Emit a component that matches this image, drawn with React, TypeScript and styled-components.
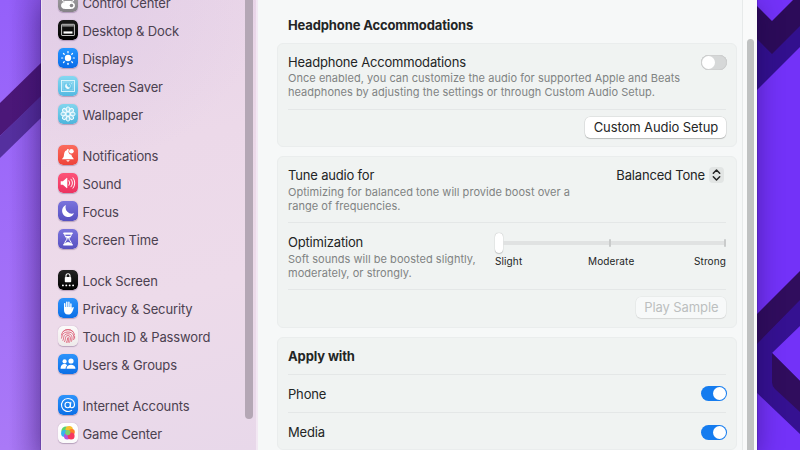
import React from "react";
import styled, { createGlobalStyle, css } from "styled-components";

const GlobalStyle = createGlobalStyle`
  * { box-sizing: border-box; }
  html, body, #root { margin: 0; padding: 0; width: 800px; height: 450px; overflow: hidden; }
  body { font-family: Inter, "Liberation Sans", sans-serif; color: #232525; background: #7030f4; }
`;

const Desktop = styled.div`
  position: relative;
  display: flex;
  width: 800px;
  height: 450px;
  padding-left: 41px;
  overflow: hidden;
`;

const Backdrop = styled.svg`
  position: absolute;
  inset: 0;
`;

const Window = styled.div`
  position: relative;
  display: flex;
  width: 716px;
  height: 450px;
  box-shadow: 0 0 1px #200040, 0 6px 24px rgba(20, 0, 60, 0.4);
`;

const Sidebar = styled.nav`
  display: flex;
  width: 217px;
  border-left: 1px solid #eee2f2;
  border-right: 2px solid #f2e8f3;
  background:
    radial-gradient(ellipse 200px 170px at 20px 0, rgba(222, 202, 230, 0.7), transparent),
    linear-gradient(165deg, #e8d4e8 0%, #ecd9e9 35%, #eddbea 65%, #e8d8ea 100%);
`;

const SidebarList = styled.div`
  flex: 1;
  display: flex;
  flex-direction: column;
  gap: 13px;
  margin-top: -12px;
  padding-left: 15.5px;
`;

const SidebarGroup = styled.div`
  display: flex;
  flex-direction: column;
  flex: none;
`;

const SidebarItem = styled.div`
  display: flex;
  align-items: center;
  gap: 5px;
  height: 28px;
  font-size: 13px;
  letter-spacing: -0.13px;
  color: #4b4150;
  white-space: nowrap;
`;

const SidebarName = styled.span`
  padding-top: 1.2px;
`;

const IconTile = styled.svg`
  display: block;
  flex: none;
  width: 20px;
  height: 20px;
  border-radius: 5px;
  box-shadow: 0 0.5px 1px rgba(60, 30, 80, 0.3);
`;

const SidebarScroll = styled.div`
  width: 8px;
  height: 419px;
  margin-right: 3px;
  border-radius: 0 0 4px 4px;
  background: #b4a7b5;
`;

const Main = styled.main`
  flex: 1;
  display: flex;
  flex-direction: column;
  padding: 13px 5px 0 19px;
  background: #f6f8f8;
`;

const PageTitle = styled.h1`
  margin: 0 0 6px 11px;
  height: 24px;
  line-height: 24px;
  font-size: 13px;
  font-weight: 700;
  letter-spacing: -0.13px;
`;

const Panel = styled.section<{ $h: number }>`
  flex: none;
  display: flex;
  flex-direction: column;
  width: 460px;
  height: ${(p) => p.$h}px;
  margin-bottom: 9px;
  padding: 0 10px;
  border: 1px solid #eaeded;
  border-radius: 6px;
  background: #f0f3f2;
`;

const Row = styled.div<{ $h: number; $line?: boolean; $center?: boolean }>`
  display: flex;
  flex: none;
  justify-content: space-between;
  align-items: ${(p) => (p.$center ? "center" : "flex-start")};
  height: ${(p) => p.$h}px;
  ${(p) => p.$line && css`border-bottom: 1px solid #e4e7e7;`}
`;

const Copy = styled.div<{ $top: number; $gap?: number }>`
  display: flex;
  flex-direction: column;
  gap: ${(p) => p.$gap ?? 0}px;
  padding-top: ${(p) => p.$top}px;
  white-space: nowrap;
`;

const Label = styled.div<{ $bold?: boolean }>`
  height: 18px;
  line-height: 18px;
  font-size: 13px;
  font-weight: ${(p) => (p.$bold ? 700 : 400)};
  letter-spacing: ${(p) => (p.$bold ? -0.13 : -0.18)}px;
  white-space: nowrap;
`;

const Hint = styled.div`
  font-size: 11px;
  line-height: 14px;
  letter-spacing: 0.035px;
  color: #808383;
`;

const Button = styled.button<{ $w: number; $off?: boolean }>`
  width: ${(p) => p.$w}px;
  height: 21px;
  margin-right: -0.4px;
  padding: 0;
  border: 0;
  border-radius: 5px;
  font: 400 13px/21px Inter, sans-serif;
  letter-spacing: -0.09px;
  color: ${(p) => (p.$off ? "#bcbfbf" : "#242626")};
  background: ${(p) => (p.$off ? "#f7f9f9" : "#fff")};
  box-shadow: 0 0 0 0.5px rgba(0, 0, 0, ${(p) => (p.$off ? 0.06 : 0.12)}),
    0 1px 1px rgba(0, 0, 0, ${(p) => (p.$off ? 0.08 : 0.18)});
  white-space: nowrap;
`;

const Toggle = styled.div<{ $on?: boolean }>`
  display: flex;
  justify-content: ${(p) => (p.$on ? "flex-end" : "flex-start")};
  width: 26px;
  height: 15px;
  margin-right: -0.5px;
  padding: 1px;
  border-radius: 8px;
  background: ${(p) => (p.$on ? "#157cef" : "#d6d8d8")};
  box-shadow: ${(p) => (p.$on ? "none" : "inset 0 0 1px #999")};
`;

const Knob = styled.div`
  width: 13px;
  height: 13px;
  border-radius: 50%;
  background: #fff;
`;

const Popup = styled.div`
  display: flex;
  align-items: center;
  gap: 4px;
  padding: 9px 2px 0 0;
`;

const Stepper = styled.svg`
  width: 15px;
  height: 16px;
  border-radius: 4px;
  background: #e2e5e4;
`;

const SliderBox = styled.div`
  display: flex;
  flex-direction: column;
  width: 231px;
  padding-top: 9px;
`;

const Track = styled.div`
  display: flex;
  align-items: center;
  height: 22px;
`;

const Thumb = styled.div`
  flex: none;
  width: 8px;
  height: 20px;
  border-radius: 4px;
  background: #fff;
  box-shadow: 0 0 1px rgba(0, 0, 0, 0.35), 0 1px 1px rgba(0, 0, 0, 0.15);
`;

const Rail = styled.div<{ $w: number }>`
  width: ${(p) => p.$w}px;
  height: 4px;
  background: #e0e2e2;
`;

const Tick = styled.div`
  flex: none;
  width: 2px;
  height: 8px;
  border-radius: 1px;
  background: #c9cbcb;
`;

const Marks = styled.div`
  display: grid;
  grid-template-columns: 93px auto 1fr;
  height: 14px;
  line-height: 14px;
  font-size: 10px;
  letter-spacing: 0.12px;
`;

const LastMark = styled.span`
  text-align: right;
`;

const Gutter = styled.div`
  display: flex;
  width: 15px;
  padding: 39px 3px 0 4px;
  border-left: 1px solid #e7eaea;
  background: #f9fafa;
`;

const GutterThumb = styled.div`
  flex: 1;
  border-radius: 4px 4px 0 0;
  background: #c0c2c2;
`;

type Kind =
  | "control" | "dock" | "display" | "saver" | "wallpaper" | "bell" | "sound" | "moon"
  | "time" | "lock" | "hand" | "touch" | "users" | "at" | "game";

const tints: Record<Kind, [string, string]> = {
  control: ["#a5a3a6", "#858387"],
  dock: ["#1a1a1a", "#000000"],
  display: ["#2496ff", "#096be8"],
  saver: ["#86d8f1", "#54b9e2"],
  wallpaper: ["#82d5ee", "#4db5dc"],
  bell: ["#fb6b5d", "#ee443a"],
  sound: ["#fd5478", "#ec3260"],
  moon: ["#7a74dd", "#5650c0"],
  time: ["#7a74dd", "#5650c0"],
  lock: ["#242424", "#000000"],
  hand: ["#2d93fb", "#0b6fe6"],
  touch: ["#fcfafa", "#eeeaea"],
  users: ["#2d93fb", "#0b6fe6"],
  at: ["#2d93fb", "#0b6fe6"],
  game: ["#ffffff", "#fafafa"],
};

const spokes = (n: number) => Array.from({ length: n }, (_, i) => (i * 360) / n);

const glyphs: Record<Kind, React.ReactNode> = {
  control: (
    <g fill="none" stroke="#fff" strokeWidth="1">
      <rect x="4" y="4.5" width="12" height="5" rx="2.5" />
      <rect x="3.5" y="10.5" width="13" height="6" rx="3" fill="#fff" />
      <circle cx="13.5" cy="13.5" r="1.8" fill="#8a888c" stroke="none" />
    </g>
  ),
  dock: (
    <g>
      <rect x="3.6" y="4.3" width="12.8" height="11.2" rx="0.5" fill="none" stroke="#ddd" strokeWidth="0.9" />
      <rect x="4.2" y="5" width="11.6" height="1.6" fill="#888" />
      <rect x="5.5" y="11.4" width="9" height="2.2" fill="#fff" />
    </g>
  ),
  display: (
    <g fill="#fff">
      <circle cx="10" cy="10" r="3.2" />
      {spokes(8).map((a) => (
        <rect key={a} x="9.4" y="3" width="1.2" height="2.3" rx="0.6" transform={`rotate(${a} 10 10)`} />
      ))}
    </g>
  ),
  saver: (
    <g fill="none" stroke="#e2f7fc" strokeWidth="0.9">
      <rect x="3.5" y="4.5" width="13" height="11" />
      <rect x="5" y="6" width="10" height="8" strokeWidth="0.3" />
      <path d="M8.8 7.4a2.9 2.9 0 1 0 3.8 3.9 3.1 3.1 0 0 1-3.8-3.9z" fill="#f2fbfd" stroke="none" />
      <path d="M11.2 8.2h1M13 7.7h.8M12 10h1" />
    </g>
  ),
  wallpaper: (
    <g fill="rgba(255,255,255,.3)" stroke="#effbff" strokeWidth="1">
      {spokes(8).map((a) => (
        <ellipse key={a} cx="10" cy="5.3" rx="1.9" ry="2.4" transform={`rotate(${a} 10 10)`} />
      ))}
      <circle cx="10" cy="10" r="2" fill="#70c8e7" />
    </g>
  ),
  bell: (
    <g fill="#fff">
      <path d="M4 14.3c0-.8 1.6-1.3 1.8-3 .3-3 .5-5.2 2.9-6 .4-1.5 1.8-1.5 2.3-.5a3.2 3.2 0 0 0 2.4 5c.4 2.7 2.4 3.3 2.4 4.5z" />
      <path d="M8.3 15.2h3.4c-.5 1.7-2.9 1.7-3.4 0z" />
      <circle cx="13.4" cy="6.3" r="2.3" />
    </g>
  ),
  sound: (
    <g>
      <path d="M2.7 8.2h2.2L8.6 5q.7-.5.7.4v9.2q0 .9-.7.4l-3.7-3.2H2.7z" fill="#fff" />
      <path d="M11 7.7a3.7 3.7 0 0 1 0 4.6M13 6.2a6 6 0 0 1 0 7.6M15 4.8a8.2 8.2 0 0 1 0 10.4" fill="none" stroke="#fff" strokeWidth="0.95" strokeLinecap="round" />
    </g>
  ),
  moon: <path d="M8 4.1a6.2 6.2 0 1 0 8 8.2A6.3 6.3 0 0 1 8 4.1z" fill="#fff" />,
  time: (
    <g>
      <path d="M6 4.3h8M6 15.7h8" stroke="#fff" strokeWidth="1.7" strokeLinecap="round" />
      <path d="M6.7 5c0 3 2.3 3.8 2.3 5s-2.3 2-2.3 5h6.6c0-3-2.3-3.8-2.3-5s2.3-2 2.3-5z" fill="none" stroke="#fff" strokeWidth="1" />
      <path d="M7.3 7h5.4L10 10zM7 15c.3-1.3 2-2 3-2.1 1 .1 2.7.8 3 2.1z" fill="#fff" />
    </g>
  ),
  lock: (
    <g fill="#fff">
      <rect x="6.8" y="6.9" width="6.4" height="5.4" rx="0.8" />
      <path d="M8 7.4V5.8a2 2 0 0 1 4 0v1.6" fill="none" stroke="#fff" strokeWidth="1.1" />
      {[4.9, 8.3, 11.7, 15.1].map((x) => <circle key={x} cx={x} cy="15.4" r="0.95" />)}
    </g>
  ),
  hand: (
    <g>
      <path d="M6.7 10V5.6M8.8 9.5V4.1M10.9 9.5V4.3M12.9 10V6" stroke="#fff" strokeWidth="1.4" strokeLinecap="round" />
      <path d="M6 9h7.6v1.8l1-1.5c.5-.6 1.4-.2 1.1.6-.8 2.3-1.5 6.6-5.6 6.6C7.2 16.5 6 14.5 6 12z" fill="#fff" />
    </g>
  ),
  touch: (
    <g fill="none" stroke="#df6a80" strokeWidth="1" strokeLinecap="round">
      <path d="M5.2 5.5a6.7 6.7 0 0 1 9.6 0M3.5 9a6.6 6.6 0 0 1 13 0M3.6 12.2c.5-.9-.3-6.1 6.4-6.2 6 0 6.4 5 5.7 7.6M5 14.4c1.2-1.5-.5-6.6 5-6.6 4.4 0 4.5 4.3 3.6 7.4M6.6 15.6c1.6-2.2-.2-6 3.4-6 3.1 0 2.6 3.8 1.6 6.6M8.5 16.4c1.6-2.8.6-4.8 1.5-4.9 1.3 0 .6 2.9 0 5M16.6 10.5v1.7" />
    </g>
  ),
  users: (
    <g fill="#fff">
      <circle cx="6.6" cy="7.4" r="2.1" />
      <circle cx="13" cy="7" r="2.6" />
      <path d="M2.6 14.7c0-5.5 5.3-5.5 6.5-3.3-1 .9-1.5 2-1.5 3.3z" />
      <path d="M8.5 14.7c0-5.4 9-5.4 9 0z" />
    </g>
  ),
  at: (
    <g fill="none" stroke="#fff" strokeWidth="1.1" strokeLinecap="round">
      <circle cx="9.7" cy="10" r="2.7" />
      <path d="M12.8 7.2l-.5 4.1c-.2 2.2 4.2 1.9 4.2-1.6 0-3.7-2.9-6.2-6.5-6.2a6.5 6.5 0 1 0 3.6 11.9" />
    </g>
  ),
  game: (
    <g>
      <circle cx="8" cy="8" r="4.6" fill="#59d36d" />
      <circle cx="11.2" cy="6.8" r="3.7" fill="#f7bf2f" />
      <circle cx="6.5" cy="10.4" r="3.4" fill="#35b5ee" />
      <circle cx="13.8" cy="9" r="3" fill="#fb7d28" />
      <circle cx="9.2" cy="13.2" r="3.2" fill="#b454df" />
      <circle cx="13.1" cy="13.1" r="3.5" fill="#f7375f" />
      <circle cx="9.8" cy="9.6" r="2.6" fill="#7ecf6d" />
    </g>
  ),
};

function Icon({ kind }: { kind: Kind }) {
  const [top, bottom] = tints[kind];
  return (
    <IconTile viewBox="0 0 20 20">
      <defs>
        <linearGradient id={`tile-${kind}`} x1="0" y1="0" x2="0" y2="1">
          <stop offset="0" stopColor={top} />
          <stop offset="1" stopColor={bottom} />
        </linearGradient>
      </defs>
      <rect width="20" height="20" rx="5" fill={`url(#tile-${kind})`} />
      {glyphs[kind]}
    </IconTile>
  );
}

const groups: [Kind, string][][] = [
  [["control", "Control Center"], ["dock", "Desktop & Dock"], ["display", "Displays"], ["saver", "Screen Saver"], ["wallpaper", "Wallpaper"]],
  [["bell", "Notifications"], ["sound", "Sound"], ["moon", "Focus"], ["time", "Screen Time"]],
  [["lock", "Lock Screen"], ["hand", "Privacy & Security"], ["touch", "Touch ID & Password"], ["users", "Users & Groups"]],
  [["at", "Internet Accounts"], ["game", "Game Center"]],
];

function Wallpaper() {
  return (
    <Backdrop width="800" height="450" viewBox="0 0 800 450">
      <defs>
        <linearGradient id="left" x1="0" y1="0" x2="0" y2="1">
          <stop offset="0" stopColor="#9560fa" />
          <stop offset="1" stopColor="#aa79f7" />
        </linearGradient>
        <linearGradient id="shade" x1="0" y1="0" x2="1" y2="0">
          <stop offset="0.2" stopColor="#3c1470" stopOpacity="0" />
          <stop offset="1" stopColor="#3c1470" stopOpacity="0.22" />
        </linearGradient>
      </defs>
      <rect width="42" height="450" fill="url(#left)" />
      <path d="M0 103L42 62v34L0 136z" fill="#4b1778" />
      <path d="M0 136L42 95v22L0 158z" fill="#55309f" />
      <rect width="42" height="450" fill="url(#shade)" />
      <rect x="756" width="44" height="450" fill="#7332f8" />
      <path d="M756 5l16 16 21-21h7v29l-28 26-16-16z" fill="#2c0b59" />
      <path d="M756 38l16 16 28-28v21l-44 44z" fill="#32108e" />
      <path d="M756 315l44-44v30l-44 45z" fill="#300d5d" />
      <path d="M756 345L800 300V326L772 353L800 381V434L756 392z" fill="#351191" />
      <path d="M772 353L800 381V412L775 389q-3-3-3-7z" fill="#300d5d" />
    </Backdrop>
  );
}

export default function App() {
  return (
    <Desktop>
      <GlobalStyle />
      <Wallpaper />
      <Window>
        <Sidebar>
          <SidebarList>
            {groups.map((items, i) => (
              <SidebarGroup key={i}>
                {items.map(([kind, name]) => (
                  <SidebarItem key={kind}>
                    <Icon kind={kind} />
                    <SidebarName>{name}</SidebarName>
                  </SidebarItem>
                ))}
              </SidebarGroup>
            ))}
          </SidebarList>
          <SidebarScroll />
        </Sidebar>
        <Main>
          <PageTitle>Headphone Accommodations</PageTitle>
          <Panel $h={104}>
            <Row $h={66} $line>
              <Copy $top={9}>
                <Label>Headphone Accommodations</Label>
                <Hint>
                  Once enabled, you can customize the audio for supported Apple and Beats
                  <br />
                  headphones by adjusting the settings or through Custom Audio Setup.
                </Hint>
              </Copy>
              <Copy $top={11}>
                <Toggle><Knob /></Toggle>
              </Copy>
            </Row>
            <Row $h={35} $center>
              <span />
              <Button $w={141}>Custom Audio Setup</Button>
            </Row>
          </Panel>
          <Panel $h={172}>
            <Row $h={66} $line>
              <Copy $top={9} $gap={1}>
                <Label>Tune audio for</Label>
                <Hint>
                  Optimizing for balanced tone will provide boost over a
                  <br />
                  range of frequencies.
                </Hint>
              </Copy>
              <Popup>
                <Label>Balanced Tone</Label>
                <Stepper viewBox="0 0 15 16">
                  <path d="M4.3 6.2L7.5 3l3.2 3.2M4.3 9.8L7.5 13l3.2-3.2" fill="none" stroke="#222" strokeWidth="1.5" strokeLinecap="round" strokeLinejoin="round" />
                </Stepper>
              </Popup>
            </Row>
            <Row $h={67} $line>
              <Copy $top={10} $gap={1}>
                <Label>Optimization</Label>
                <Hint>
                  Soft sounds will be boosted slightly,
                  <br />
                  moderately, or strongly.
                </Hint>
              </Copy>
              <SliderBox>
                <Track>
                  <Thumb />
                  <Rail $w={106} />
                  <Tick />
                  <Rail $w={113} />
                  <Tick />
                </Track>
                <Marks>
                  <span>Slight</span>
                  <span>Moderate</span>
                  <LastMark>Strong</LastMark>
                </Marks>
              </SliderBox>
            </Row>
            <Row $h={35} $center>
              <span />
              <Button $w={90} $off>Play Sample</Button>
            </Row>
          </Panel>
          <Panel $h={113}>
            <Row $h={37} $line $center>
              <Label $bold>Apply with</Label>
            </Row>
            <Row $h={38} $line $center>
              <Label>Phone</Label>
              <Toggle $on><Knob /></Toggle>
            </Row>
            <Row $h={38} $center>
              <Label>Media</Label>
              <Toggle $on><Knob /></Toggle>
            </Row>
          </Panel>
        </Main>
        <Gutter>
          <GutterThumb />
        </Gutter>
      </Window>
    </Desktop>
  );
}
